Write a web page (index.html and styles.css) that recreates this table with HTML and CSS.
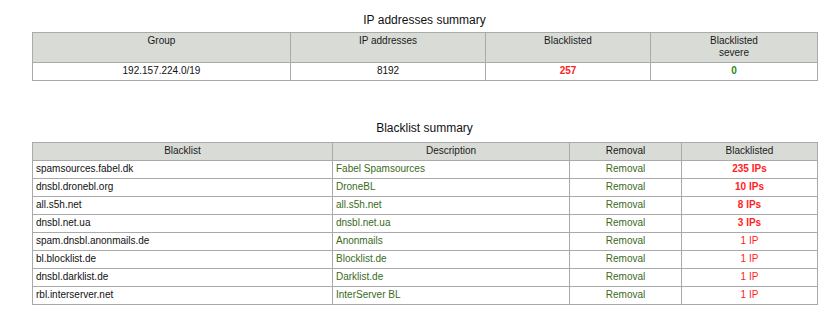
FILE: index.html
```html
<!DOCTYPE html>
<html>
<head>
<meta charset="utf-8">
<title>IP addresses summary</title>
<link rel="stylesheet" href="styles.css">
</head>
<body>
<div class="page">
  <section class="block first">
    <h2 class="title">IP addresses summary</h2>
    <table class="grid">
      <colgroup>
        <col class="c-group"><col class="c-ips"><col class="c-bl"><col class="c-sev">
      </colgroup>
      <thead>
        <tr><th>Group</th><th>IP addresses</th><th>Blacklisted</th><th>Blacklisted<br>severe</th></tr>
      </thead>
      <tbody>
        <tr><td class="center">192.157.224.0/19</td><td class="center">8192</td><td class="center red bold">257</td><td class="center ok bold">0</td></tr>
      </tbody>
    </table>
  </section>

  <section class="block second">
    <h2 class="title">Blacklist summary</h2>
    <table class="grid">
      <colgroup>
        <col class="c-name"><col class="c-desc"><col class="c-rem"><col class="c-cnt">
      </colgroup>
      <thead>
        <tr><th>Blacklist</th><th>Description</th><th>Removal</th><th>Blacklisted</th></tr>
      </thead>
      <tbody>
        <tr><td>spamsources.fabel.dk</td><td class="green">Fabel Spamsources</td><td class="center green">Removal</td><td class="center red bold">235 IPs</td></tr>
        <tr><td>dnsbl.dronebl.org</td><td class="green">DroneBL</td><td class="center green">Removal</td><td class="center red bold">10 IPs</td></tr>
        <tr><td>all.s5h.net</td><td class="green">all.s5h.net</td><td class="center green">Removal</td><td class="center red bold">8 IPs</td></tr>
        <tr><td>dnsbl.net.ua</td><td class="green">dnsbl.net.ua</td><td class="center green">Removal</td><td class="center red bold">3 IPs</td></tr>
        <tr><td>spam.dnsbl.anonmails.de</td><td class="green">Anonmails</td><td class="center green">Removal</td><td class="center red">1 IP</td></tr>
        <tr><td>bl.blocklist.de</td><td class="green">Blocklist.de</td><td class="center green">Removal</td><td class="center red">1 IP</td></tr>
        <tr><td>dnsbl.darklist.de</td><td class="green">Darklist.de</td><td class="center green">Removal</td><td class="center red">1 IP</td></tr>
        <tr><td>rbl.interserver.net</td><td class="green">InterServer BL</td><td class="center green">Removal</td><td class="center red">1 IP</td></tr>
      </tbody>
    </table>
  </section>
</div>
</body>
</html>
```

FILE: styles.css
```css
html, body {
  margin: 0;
  padding: 0;
  background: #ffffff;
}

body {
  font-family: "Liberation Sans", Arial, sans-serif;
  color: #111111;
}

.page {
  padding-left: 32px;
  width: 785px;
}

.block.first {
  padding-top: 13px;
}

.block.second {
  padding-top: 40px;
}

.title {
  margin: 0 0 5px;
  font-size: 12px;
  line-height: 14px;
  font-weight: normal;
  text-align: center;
  color: #111111;
}

.block.second .title {
  margin-bottom: 7px;
}

.grid {
  width: 785px;
  border-collapse: collapse;
  table-layout: fixed;
  font-size: 10px;
  line-height: 12px;
  border: 1px solid #b4b4b4;
}

.grid th,
.grid td {
  border: 1px solid #aaaaaa;
  padding: 2px 3px 3px;
  vertical-align: top;
}

.grid th {
  background: #d9dcd6;
  font-weight: normal;
  color: #1a1a1a;
  text-align: center;
}

.c-group { width: 258px; }
.c-ips { width: 195px; }
.c-bl { width: 165px; }
.c-sev { width: 167px; }

.c-name { width: 300px; }
.c-desc { width: 237px; }
.c-rem { width: 112px; }
.c-cnt { width: 136px; }

.center { text-align: center; }
.bold { font-weight: bold; }
.red { color: #ff2222; }
.green { color: #3a6a1c; }
.ok { color: #2a8a22; }
```
